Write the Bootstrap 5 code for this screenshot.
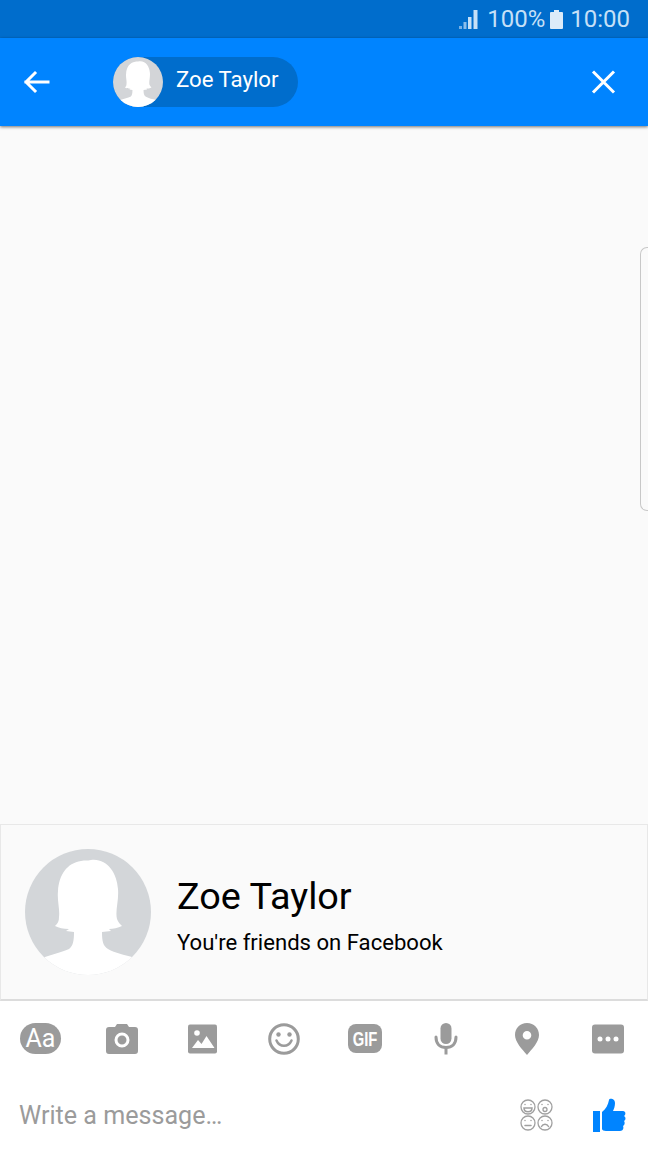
<!DOCTYPE html>
<html lang="en"><head><meta charset="utf-8"><title>Zoe Taylor</title>
<link href="https://cdn.jsdelivr.net/npm/bootstrap@5.3.0/dist/css/bootstrap.min.css" rel="stylesheet">
<style>
html,body{height:100%}
body{width:648px;height:1152px;overflow:hidden;background:#fff;font-family:Roboto,"Liberation Sans",sans-serif}
.phone{height:1152px;position:relative}
.phone>div{flex:none}
.status-strip{height:38px;background:#006dcc;color:#c6e0f7;font-size:24px;line-height:38px;padding-right:18px}
.status-strip .pct{margin-left:8px;margin-right:5px}
.status-strip .clock{margin-left:7px}
.app-bar{height:88px;background:#0084ff;box-shadow:0 1px 3px rgba(0,0,0,.55);position:relative;z-index:2;padding:0 32px 0 23px}
.back-ico{margin-right:63px}
.name-pill{height:50px;width:185px;background:#006dcc;border-radius:25px;color:#fff;font-size:22.2px;margin-top:-1px}
.pill-name{margin-left:13px;margin-top:-3px}
.avatar-s{width:50px;height:50px;flex:none}
.thread{height:698px;background:#fafafa;position:relative}
.edge-handle{position:absolute;right:0;top:121px;width:8px;height:264px;border:1px solid #c8c8c8;border-right:0;border-radius:7px 0 0 7px}
.intro{height:177px;background:#fafafa;border:1px solid #e8e8e8;border-bottom:2px solid #dcdcdc;padding-left:24px}
.intro-name{font-size:37.8px;line-height:44px;color:#000}
.intro-sub{font-size:22.1px;line-height:30px;color:#000;margin-top:9px}
.intro-copy{margin-left:26px;margin-top:7px}
.tools{height:77px;padding-bottom:2px}
.tool-cell{width:81px;height:75px;flex:none}
.write-row{height:74px;padding:0 22px 0 19px}
.write-ph{font-size:25.1px;color:#9b9b9b;margin-top:1px}
.emoji-ico{margin-right:40px}
</style></head>
<body>
<div class="phone d-flex flex-column">
  <div class="status-strip d-flex justify-content-end align-items-center">
    <svg width="20" height="19" viewBox="0 0 20 19" fill="#c6e0f7"><rect x="0" y="16" width="3" height="3" opacity=".6"/><rect x="4.500" y="12" width="3" height="7" opacity=".7"/><rect x="9" y="7" width="3.500" height="12"/><rect x="14.500" y="0" width="4" height="19"/></svg>
    <span class="pct">100%</span>
    <svg width="13" height="19" viewBox="0 0 13 19" fill="#dcebf9"><path d="M4 0h5v2h3a1 1 0 0 1 1 1v15a1 1 0 0 1-1 1H1a1 1 0 0 1-1-1V3a1 1 0 0 1 1-1h3z"/></svg>
    <span class="clock">10:00</span>
  </div>
  <div class="app-bar d-flex align-items-center">
    <svg class="back-ico" width="27" height="24" viewBox="0 0 27 24" fill="none" stroke="#fff" stroke-width="3" stroke-linecap="square"><path d="M25 12H3M12 3l-9 9 9 9"/></svg>
    <div class="name-pill d-flex align-items-center">
      <svg class="avatar-s" viewBox="0 0 126 126"><defs><clipPath id="ca"><circle cx="63" cy="63" r="63"/></clipPath></defs><circle cx="63" cy="63" r="63" fill="#d3d5d8"/><g clip-path="url(#ca)"><path d="M56 12C60 11 62 12 66 11C82 9 92 24 93 40C94 52 90 62 92 70C93 73 95 75 97 77C93 79 88 80 84 80L86 82L77 83C77 92 78 97 83 100C90 104 100 106 107 108L130 130L0 130L20 108C28 105 38 103 44 100C48 97 49 92 49 83L41 82L44 80C38 80 34 79 30 77C33 74 34 72 34 68C35 60 32 52 33 42C34 26 42 14 56 12Z" fill="#fff"/></g></svg>
      <span class="pill-name">Zoe Taylor</span>
    </div>
    <svg class="ms-auto" width="25" height="24" viewBox="0 0 25 24" fill="none" stroke="#fff" stroke-width="3"><path d="M2 1.500l21 21M23 1.500l-21 21"/></svg>
  </div>
  <div class="thread"><div class="edge-handle"></div></div>
  <div class="intro d-flex align-items-center">
    <svg width="126" height="126" viewBox="0 0 126 126" class="flex-shrink-0"><defs><clipPath id="cb"><circle cx="63" cy="63" r="63"/></clipPath></defs><circle cx="63" cy="63" r="63" fill="#d3d6d9"/><g clip-path="url(#cb)"><path d="M56 12C60 11 62 12 66 11C82 9 92 24 93 40C94 52 90 62 92 70C93 73 95 75 97 77C93 79 88 80 84 80L86 82L77 83C77 92 78 97 83 100C90 104 100 106 107 108L130 130L0 130L20 108C28 105 38 103 44 100C48 97 49 92 49 83L41 82L44 80C38 80 34 79 30 77C33 74 34 72 34 68C35 60 32 52 33 42C34 26 42 14 56 12Z" fill="#fff"/></g></svg>
    <div class="intro-copy">
      <div class="intro-name">Zoe Taylor</div>
      <div class="intro-sub">You're friends on Facebook</div>
    </div>
  </div>
  <div class="tools d-flex align-items-center">
    <div class="tool-cell d-flex align-items-center justify-content-center">
      <svg width="42" height="32" viewBox="0 0 42 32"><rect width="41" height="31" rx="15.500" fill="#9b9b9b"/><text x="20.500" y="24" text-anchor="middle" font-family="Roboto,sans-serif" font-size="25" fill="#fff">Aa</text></svg>
    </div>
    <div class="tool-cell d-flex align-items-center justify-content-center">
      <svg width="32" height="30" viewBox="0 0 32 30"><path d="M11 0h10l2 3h6a3 3 0 0 1 3 3v21a3 3 0 0 1-3 3H3a3 3 0 0 1-3-3V6a3 3 0 0 1 3-3h6z" fill="#9b9b9b"/><circle cx="16" cy="16" r="6" fill="none" stroke="#fff" stroke-width="3"/></svg>
    </div>
    <div class="tool-cell d-flex align-items-center justify-content-center">
      <svg width="30" height="30" viewBox="0 0 30 30"><rect width="29" height="29" y=".5" rx="2" fill="#9b9b9b"/><circle cx="9" cy="9" r="2.800" fill="#fff"/><path d="M4 24l6-8 3.500 4 5-8 8 12z" fill="#fff"/></svg>
    </div>
    <div class="tool-cell d-flex align-items-center justify-content-center">
      <svg width="32" height="32" viewBox="0 0 32 32" fill="none" stroke="#9b9b9b"><circle cx="16" cy="16" r="14.300" stroke-width="3"/><path d="M8.500 17.500c3 7 12 7 15 0" stroke-width="2.500" stroke-linecap="round"/><circle cx="10.500" cy="11.500" r="2.200" fill="#9b9b9b" stroke="none"/><circle cx="21.500" cy="11.500" r="2.200" fill="#9b9b9b" stroke="none"/></svg>
    </div>
    <div class="tool-cell d-flex align-items-center justify-content-center">
      <svg width="34" height="30" viewBox="0 0 34 30"><rect width="34" height="29" rx="8" fill="#9b9b9b"/><text transform="translate(17 21.500) scale(.74 1)" text-anchor="middle" font-family="'Liberation Sans',sans-serif" font-weight="700" font-size="20" fill="#fff">GIF</text></svg>
    </div>
    <div class="tool-cell d-flex align-items-center justify-content-center">
      <svg width="24" height="32" viewBox="0 0 24 32"><rect x="6.500" y="0" width="11" height="21" rx="5.500" fill="#9b9b9b"/><path d="M2 14c0 7 4 10.500 10 10.500S22 21 22 14" fill="none" stroke="#9b9b9b" stroke-width="3" stroke-linecap="round"/><rect x="10.500" y="24" width="3" height="7.500" fill="#9b9b9b"/></svg>
    </div>
    <div class="tool-cell d-flex align-items-center justify-content-center">
      <svg width="24" height="32" viewBox="0 0 24 32"><path fill-rule="evenodd" d="M12 0c7 0 12 5 12 12 0 7-7 14-12 20C7 26 0 19 0 12 0 5 5 0 12 0zm0 8a4.300 4.300 0 1 0 0 8.600A4.300 4.300 0 0 0 12 8z" fill="#9b9b9b"/></svg>
    </div>
    <div class="tool-cell d-flex align-items-center justify-content-center">
      <svg width="32" height="30" viewBox="0 0 32 30"><rect width="32" height="29" y=".5" rx="3" fill="#9b9b9b"/><circle cx="8" cy="15" r="2.500" fill="#fff"/><circle cx="16" cy="15" r="2.500" fill="#fff"/><circle cx="24" cy="15" r="2.500" fill="#fff"/></svg>
    </div>
  </div>
  <div class="write-row d-flex align-items-center">
    <span class="write-ph">Write a message…</span>
    <svg class="emoji-ico ms-auto" width="33" height="32" viewBox="0 0 33 32" fill="none" stroke="#a0a0a0" stroke-width="1.300">
      <circle cx="8" cy="8" r="7"/><circle cx="25" cy="8" r="7"/><circle cx="8" cy="24" r="7"/><circle cx="25" cy="24" r="7"/>
      <path d="M4 9h8c0 5-8 5-8 0zM5 21.500v0M11 21.500v0M5 26.500h6M22 5.500v0M28 5.500v0M5 5.500v0M11 5.500v0M22 21.500v0M28 21.500v0M21.500 27.500c1.500-3 5.500-3 7 0" stroke-linecap="round" stroke-width="1.500"/>
      <circle cx="25" cy="10.500" r="2"/>
    </svg>
    <svg width="33" height="35" viewBox="0 0 33 35" fill="#0084ff"><rect x="0" y="13" width="7" height="21"/><path d="M9 14c4-3 6-7 7-12 0-2 6-2 6 3 0 3-1 6-2 8h10c3 0 3 4 1 5 2 1 2 4 0 5 1 1 1 4-1 5 1 2 0 5-3 5H13c-2 0-4-1-4-2z"/></svg>
  </div>
</div>
</body></html>
